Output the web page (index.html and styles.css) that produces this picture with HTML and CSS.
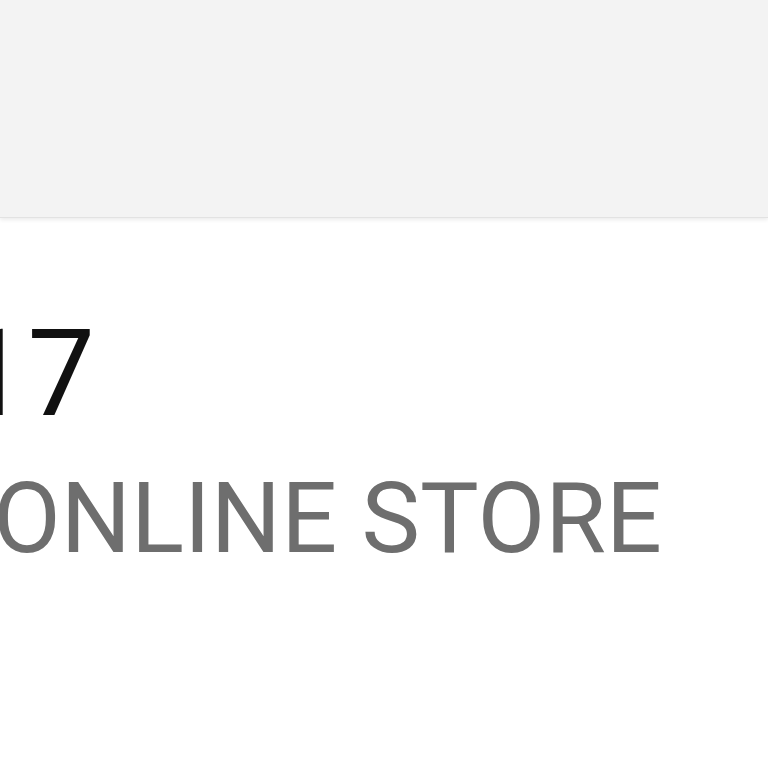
FILE: index.html
```html
<!DOCTYPE html>
<html>
<head>
<meta charset="utf-8">
<link rel="stylesheet" href="styles.css">
</head>
<body>
<header class="topbar"></header>
<main class="content">
  <div class="date">17</div>
  <div class="subtitle">ONLINE STORE</div>
</main>
</body>
</html>
```
FILE: styles.css
```css
html, body {
  margin: 0;
  padding: 0;
  background: #ffffff;
  overflow: hidden;
  font-family: Roboto, "Liberation Sans", sans-serif;
}
.topbar {
  height: 217px;
  background: #f3f3f3;
  box-shadow: 0 2px 4px rgba(0, 0, 0, 0.08);
  border-bottom: 1px solid #e2e2e2;
}
.content {
  padding-top: 96px;
}
.date {
  font-size: 120px;
  line-height: 1;
  color: #111111;
  margin-left: -40px;
  white-space: nowrap;
}
.subtitle {
  margin-top: 36px;
  font-size: 98.5px;
  line-height: 1;
  color: #6e6e6e;
  margin-left: -7px;
  white-space: nowrap;
}
```
